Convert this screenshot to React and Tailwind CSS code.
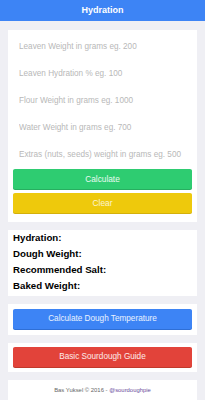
import React from "react";

const inputs = [
  "Leaven Weight in grams eg. 200",
  "Leaven Hydration % eg. 100",
  "Flour Weight in grams eg. 1000",
  "Water Weight in grams eg. 700",
  "Extras (nuts, seeds) weight in grams eg. 500",
];

const labels = ["Hydration:", "Dough Weight:", "Recommended Salt:", "Baked Weight:"];

export default function App() {
  return (
    <div className="min-h-[400px] w-[205px] bg-[#efeff4] font-['Liberation_Sans',Arial,sans-serif]">
      <div className="flex h-[21px] items-center justify-center bg-[#3d84f5] text-[9px] font-semibold text-white">
        Hydration
      </div>
      <div className="flex flex-col gap-[8px] px-[8px] pt-[9px]">
        <div className="flex flex-col bg-white px-[5px] pb-[9px] pt-[3px]">
          {inputs.map((p) => (
            <input
              key={p}
              placeholder={p}
              className="block h-[27px] w-full bg-white pl-[6px] text-[8.2px] outline-none placeholder:text-[#b8b8b8]"
            />
          ))}
          <button className="mt-[1px] block h-[20px] w-full rounded-[2px] bg-[#2ecc71] text-[8.3px] text-white/90 shadow-[0_1px_0_#27ae60]">
            Calculate
          </button>
          <button className="mt-[4px] block h-[20px] w-full rounded-[2px] bg-[#eec90c] text-[8.3px] text-white/80 shadow-[0_1px_0_#d4b00a]">
            Clear
          </button>
        </div>
        <div className="flex flex-col bg-white px-[5px] pb-[2px]">
          {labels.map((l) => (
            <div key={l} className="h-[16px] text-[9.7px] font-bold leading-[16px] text-black">
              {l}
            </div>
          ))}
        </div>
        <div className="flex flex-col bg-white px-[5px] pb-[6px] pt-[5px]">
          <button className="block h-[20px] w-full rounded-[2px] bg-[#3d84f5] text-[8.2px] text-white/90 shadow-[0_1px_0_#2f6fd6]">
            Calculate Dough Temperature
          </button>
        </div>
        <div className="flex flex-col bg-white px-[5px] pb-[5px] pt-[4px]">
          <button className="block h-[20px] w-full rounded-[2px] bg-[#e2433a] text-[8.2px] text-white/90 shadow-[0_1px_0_#c0392b]">
            Basic Sourdough Guide
          </button>
        </div>
        <div className="flex h-[22px] items-center justify-center bg-white text-[5.9px] leading-none text-[#666]">
          <span>
            Bas Yuksel © 2016 - <span className="text-[#6a4c9c]">@sourdoughpie</span>
          </span>
        </div>
      </div>
    </div>
  );
}
